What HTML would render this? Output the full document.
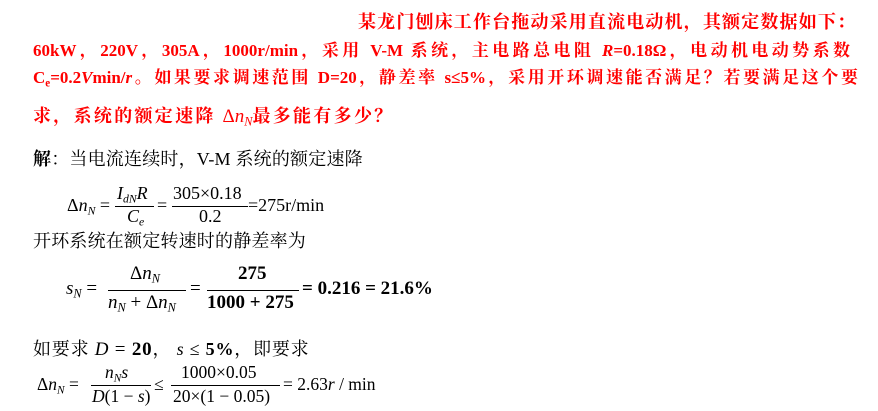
<!DOCTYPE html>
<html><head><meta charset="utf-8"><style>
body{margin:0;width:878px;height:411px;background:#fff;position:relative;overflow:hidden;font-family:"Liberation Serif","Noto Serif CJK SC",serif;}
.a{position:absolute;white-space:nowrap;}
.r{color:#f00;font-weight:bold;font-size:17px;}
.j{text-align:justify;text-align-last:justify;white-space:normal;}
.k{font-size:18px;color:#000;}
i{font-style:italic}
sub{font-size:0.65em;vertical-align:-0.3em}
.ln{position:absolute;height:1px;background:#000;}
</style></head><body>
<div class="a r j" style="left:358px;top:8px;width:497px;font-size:18px;">某龙门刨床工作台拖动采用直流电动机，其额定数据如下：</div>
<div class="a r j" style="left:33px;top:36px;width:817px;">60kW，220V，305A，1000r/min，采用 V-M 系统，主电路总电阻 <i>R</i>=0.18Ω，电动机电动势系数</div>
<div class="a r j" style="left:33px;top:63px;width:825px;">C<sub>e</sub>=0.2<i>V</i>min/<i>r</i>。如果要求调速范围 D=20，静差率 s≤5%，采用开环调速能否满足？若要满足这个要</div>
<div class="a r" style="left:33px;top:102px;font-size:18px;letter-spacing:2.3px;">求，系统的额定速降 <span style="font-weight:normal;font-size:19px;letter-spacing:0">Δ<i>n</i><sub><i>N</i></sub></span>最多能有多少？</div>

<div class="a k" style="left:33px;top:145px;letter-spacing:0.2px"><b>解</b>：当电流连续时，V-M 系统的额定速降</div>

<!-- eq1 -->
<div class="a k" style="left:67px;top:195px;">Δ<i>n</i><sub><i>N</i></sub> =</div>
<div class="a k" style="left:117px;top:183px;"><i>I</i><sub><i>dN</i></sub><i>R</i></div>
<div class="ln" style="left:115px;top:206px;width:39px"></div>
<div class="a k" style="left:127px;top:206px;"><i>C</i><sub><i>e</i></sub></div>
<div class="a k" style="left:157px;top:195px;">=</div>
<div class="a k" style="left:173px;top:183px;">305×0.18</div>
<div class="ln" style="left:172px;top:206px;width:76px"></div>
<div class="a k" style="left:199px;top:206px;">0.2</div>
<div class="a k" style="left:248px;top:195px;">=275r/min</div>
<div class="a k" style="left:33px;top:227px;letter-spacing:0.2px">开环系统在额定转速时的静差率为</div>

<!-- eq2 -->
<div class="a k" style="left:66px;top:278px;font-size:19px"><i>s</i><sub><i>N</i></sub> =</div>
<div class="a k" style="left:130px;top:263px;font-size:19px">Δ<i>n</i><sub><i>N</i></sub></div>
<div class="ln" style="left:108px;top:290px;width:78px"></div>
<div class="a k" style="left:108px;top:292px;font-size:19px"><i>n</i><sub><i>N</i></sub> + Δ<i>n</i><sub><i>N</i></sub></div>
<div class="a k" style="left:190px;top:278px;font-size:19px">=</div>
<div class="a k" style="left:238px;top:263px;font-size:19px;font-weight:bold">275</div>
<div class="ln" style="left:207px;top:290px;width:92px"></div>
<div class="a k" style="left:207px;top:292px;font-size:19px;font-weight:bold">1000 + 275</div>
<div class="a k" style="left:302px;top:278px;font-size:19px;font-weight:bold">= 0.216 = 21.6%</div>

<div class="a k" style="left:33px;top:335px;letter-spacing:0.8px">如要求 <span style="font-size:19px"><i>D</i> = <b>20</b></span>， <i>s</i> ≤ <b>5%</b>，即要求</div>

<!-- eq3 -->
<div class="a k" style="left:37px;top:374px;font-size:17.5px">Δ<i>n</i><sub><i>N</i></sub> =</div>
<div class="a k" style="left:105px;top:362px;font-size:17.5px"><i>n</i><sub><i>N</i></sub><i>s</i></div>
<div class="ln" style="left:91px;top:385px;width:60px"></div>
<div class="a k" style="left:92px;top:386px;font-size:17.5px"><i>D</i>(1 − <i>s</i>)</div>
<div class="a k" style="left:154px;top:374px;font-size:17.5px">≤</div>
<div class="a k" style="left:181px;top:362px;font-size:17.5px">1000×0.05</div>
<div class="ln" style="left:171px;top:385px;width:109px"></div>
<div class="a k" style="left:173px;top:386px;font-size:17.5px">20×(1 − 0.05)</div>
<div class="a k" style="left:283px;top:374px;font-size:17.5px">= 2.63<i>r</i> / min</div>
</body></html>
